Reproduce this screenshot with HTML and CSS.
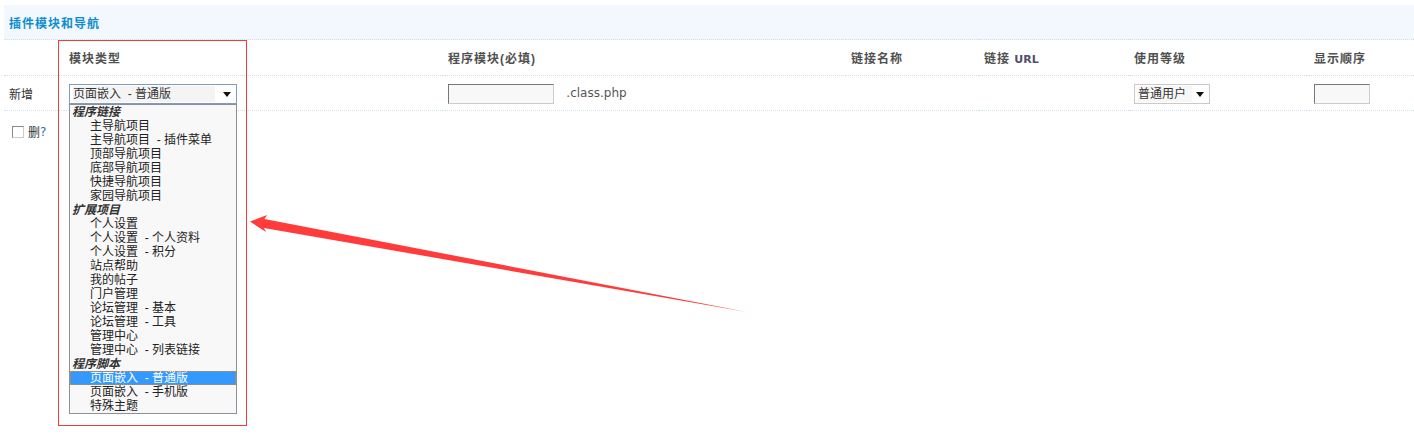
FILE: index.html
```html
<!DOCTYPE html>
<html lang="zh-CN">
<head>
    <meta charset="UTF-8">
    <title>插件模块和导航</title>
    <link rel="stylesheet" href="styles.css">
</head>
<body>
    <div class="page">
        <table class="tb">
            <colgroup>
                <col class="c1"><col class="c2"><col class="c3"><col class="c4"><col class="c5"><col class="c6"><col class="c7">
            </colgroup>
            <!-- titre du bloc -->
            <tr class="title">
                <th colspan="7">插件模块和导航</th>
            </tr>
            <tr class="header">
                <td></td>
                <td>模块类型</td>
                <td>程序模块(必填)</td>
                <td>链接名称</td>
                <td>链接 <span class="latin">URL</span></td>
                <td>使用等级</td>
                <td>显示顺序</td>
            </tr>
            <tr class="row">
                <td>新增</td>
                <td>
                    <div class="dropdown">
                        <div class="select open">
                            <span class="value">页面嵌入 &nbsp;- 普通版</span>
                            <span class="caret"></span>
                        </div>
                        <ul class="listbox">
                            <li class="group">程序链接</li>
                            <li>主导航项目</li>
                            <li>主导航项目 &nbsp;- 插件菜单</li>
                            <li>顶部导航项目</li>
                            <li>底部导航项目</li>
                            <li>快捷导航项目</li>
                            <li>家园导航项目</li>
                            <li class="group">扩展项目</li>
                            <li>个人设置</li>
                            <li>个人设置 &nbsp;- 个人资料</li>
                            <li>个人设置 &nbsp;- 积分</li>
                            <li>站点帮助</li>
                            <li>我的帖子</li>
                            <li>门户管理</li>
                            <li>论坛管理 &nbsp;- 基本</li>
                            <li>论坛管理 &nbsp;- 工具</li>
                            <li>管理中心</li>
                            <li>管理中心 &nbsp;- 列表链接</li>
                            <li class="group">程序脚本</li>
                            <li class="selected">页面嵌入 &nbsp;- 普通版</li>
                            <li>页面嵌入 &nbsp;- 手机版</li>
                            <li>特殊主题</li>
                        </ul>
                    </div>
                </td>
                <td>
                    <input type="text" class="txt module">
                    <span class="suffix">.class.php</span>
                </td>
                <td></td>
                <td></td>
                <td>
                    <div class="select small">
                        <span class="value">普通用户</span>
                        <span class="caret"></span>
                    </div>
                </td>
                <td><input type="text" class="txt order"></td>
            </tr>
            <tr class="row last">
                <td colspan="7">
                    <label class="del"><span class="checkbox"></span>删<a href="#">?</a></label>
                </td>
            </tr>
        </table>

        <!-- annotations de la capture -->
        <div class="highlight"></div>
        <svg class="arrow" width="1414" height="447" viewBox="0 0 1414 447">
            <polygon points="250,221.5 267,215 264.5,219 747,312 264,228 266,232" fill="#ff3b3b"/>
        </svg>
    </div>
</body>
</html>
```

FILE: styles.css
```css
html, body { height: 100%; }
body { margin: 5px 0 0 4px; font: 12px "Liberation Sans", "Noto Sans CJK SC", sans-serif; color: #333; background: #fff; }
.page { position: relative; min-height: 437px; }
.tb { width: 1410px; border-collapse: collapse; table-layout: fixed; }
.tb td, .tb th { padding: 0 5px; text-align: left; vertical-align: middle; }
.c1 { width: 60px; } .c2 { width: 379px; } .c3 { width: 403px; } .c4 { width: 133px; }
.c5 { width: 150px; } .c6 { width: 180px; } .c7 { width: 105px; }

.title th { height: 34px; background: #f2f8fd; color: #0f8ecd; font-weight: bold; letter-spacing: 1px; border-bottom: 1px dotted #cfe1ef; }
.header td { height: 35px; font-weight: bold; color: #505050; letter-spacing: 1px; border-bottom: 1px dotted #cfe1ef; }
.header .latin { letter-spacing: 0; font-family: "DejaVu Sans", sans-serif; font-size: 11px; color: #505070; }
.row td { height: 34px; border-bottom: 1px dotted #cfe1ef; }
.row.last td { border-bottom: none; height: 36px; vertical-align: top; padding-top: 12px; }

/* select ouvert */
.dropdown { position: relative; width: 168px; margin-top: 1px; }
.select { box-sizing: border-box; height: 20px; border: 1px solid #7f9dba; background: #fff; display: flex; align-items: center; padding: 0 3px; position: relative; }
.select .value { flex: 1; line-height: 16px; background: #f4f4f4; margin-right: 18px; white-space: nowrap; }
.select .caret { position: absolute; right: 5px; top: 7px; border-left: 4px solid transparent; border-right: 4px solid transparent; border-top: 5px solid #111; }
.select.small { width: 76px; border-color: #c9c9c9; margin-top: 1px; }
.select.small .value { background: #f7f7f7; margin-right: 14px; }

.listbox { position: absolute; top: 20px; left: 0; width: 168px; box-sizing: border-box; margin: 0; padding: 0; list-style: none; background: #f8f8f8; border: 1px solid #8d8f99; z-index: 2; }
.listbox li { height: 14px; line-height: 14px; padding-left: 20px; color: #222; white-space: nowrap; }
.listbox li.group { padding-left: 2px; font-weight: bold; font-style: italic; color: #333; }
.listbox li.selected { background: #3399ff; color: #fff; outline: 1px dotted #e0821e; outline-offset: -1px; }

/* champs texte */
.txt { box-sizing: border-box; height: 20px; margin: 1px 0 0; padding: 0 3px; background: #f8f8f8; border: 1px solid #ccc; border-top-color: #777; border-left-color: #777; vertical-align: middle; }
.txt.module { width: 106px; }
.txt.order { width: 56px; }
.suffix { margin-left: 9px; font-family: "DejaVu Sans", sans-serif; color: #555; vertical-align: middle; }

.del { display: inline-flex; align-items: center; margin-left: 3px; color: #333; }
.checkbox { width: 10px; height: 10px; border: 1px solid #888; border-right-color: #ccc; border-bottom-color: #ccc; background: #fff; margin-right: 4px; }
.del a { color: #2f6fb0; text-decoration: none; font-family: "DejaVu Sans", sans-serif; }

.highlight { position: absolute; left: 54px; top: 35px; width: 187px; height: 384px; border: 1px solid #f03c3c; pointer-events: none; z-index: 3; }
.arrow { position: absolute; left: -4px; top: -5px; pointer-events: none; z-index: 3; }
```
